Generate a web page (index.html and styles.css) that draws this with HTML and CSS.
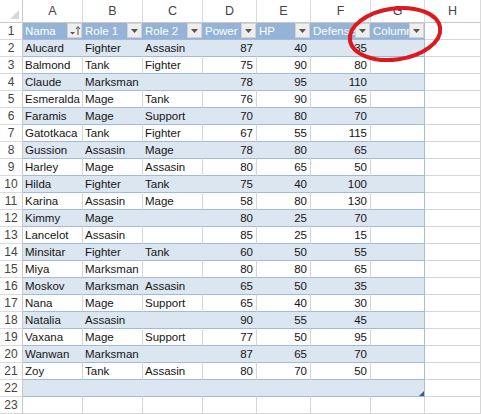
FILE: index.html
```html
<!DOCTYPE html>
<html>
<head>
<meta charset="utf-8">
<link rel="stylesheet" href="styles.css">
</head>
<body>
<div class="sheet">
  <div class="row head">
    <div class="corner"><svg width="22" height="22" viewBox="0 0 22 22"><polygon points="10,19 19,19 19,10" fill="#d8d8d8"/></svg></div>
    <div class="ch">A</div><div class="ch">B</div><div class="ch">C</div><div class="ch">D</div><div class="ch">E</div><div class="ch">F</div><div class="ch">G</div><div class="ch">H</div>
  </div>
  <div class="row thead">
    <div class="rh">1</div>
    <div class="c th">Nama<span class="fb"><svg width="13" height="13" viewBox="0 0 13 13"><polygon points="2,8 7,8 4.5,10.5" fill="#555"/><line x1="10" y1="3" x2="10" y2="11" stroke="#555" stroke-width="1"/><polyline points="8,5 10,2.5 12,5" fill="none" stroke="#555" stroke-width="1"/></svg></span></div>
    <div class="c th">Role 1<span class="fb"><svg width="13" height="13" viewBox="0 0 13 13"><polygon points="3,5 10,5 6.5,9" fill="#555"/></svg></span></div>
    <div class="c th">Role 2<span class="fb"><svg width="13" height="13" viewBox="0 0 13 13"><polygon points="3,5 10,5 6.5,9" fill="#555"/></svg></span></div>
    <div class="c th">Power<span class="fb"><svg width="13" height="13" viewBox="0 0 13 13"><polygon points="3,5 10,5 6.5,9" fill="#555"/></svg></span></div>
    <div class="c th">HP<span class="fb"><svg width="13" height="13" viewBox="0 0 13 13"><polygon points="3,5 10,5 6.5,9" fill="#555"/></svg></span></div>
    <div class="c th">Defense<span class="fb"><svg width="13" height="13" viewBox="0 0 13 13"><polygon points="3,5 10,5 6.5,9" fill="#555"/></svg></span></div>
    <div class="c th last">Column1<span class="fb"><svg width="13" height="13" viewBox="0 0 13 13"><polygon points="3,5 10,5 6.5,9" fill="#555"/></svg></span></div>
    <div class="c out"></div>
  </div>
  <div class="row band"><div class="rh">2</div><div class="c">Alucard</div><div class="c">Fighter</div><div class="c">Assasin</div><div class="c n">87</div><div class="c n">40</div><div class="c n">35</div><div class="c last"></div><div class="c out"></div></div>
  <div class="row plain"><div class="rh">3</div><div class="c">Balmond</div><div class="c">Tank</div><div class="c">Fighter</div><div class="c n">75</div><div class="c n">90</div><div class="c n">80</div><div class="c last"></div><div class="c out"></div></div>
  <div class="row band"><div class="rh">4</div><div class="c">Claude</div><div class="c">Marksman</div><div class="c"></div><div class="c n">78</div><div class="c n">95</div><div class="c n">110</div><div class="c last"></div><div class="c out"></div></div>
  <div class="row plain"><div class="rh">5</div><div class="c">Esmeralda</div><div class="c">Mage</div><div class="c">Tank</div><div class="c n">76</div><div class="c n">90</div><div class="c n">65</div><div class="c last"></div><div class="c out"></div></div>
  <div class="row band"><div class="rh">6</div><div class="c">Faramis</div><div class="c">Mage</div><div class="c">Support</div><div class="c n">70</div><div class="c n">80</div><div class="c n">70</div><div class="c last"></div><div class="c out"></div></div>
  <div class="row plain"><div class="rh">7</div><div class="c">Gatotkaca</div><div class="c">Tank</div><div class="c">Fighter</div><div class="c n">67</div><div class="c n">55</div><div class="c n">115</div><div class="c last"></div><div class="c out"></div></div>
  <div class="row band"><div class="rh">8</div><div class="c">Gussion</div><div class="c">Assasin</div><div class="c">Mage</div><div class="c n">78</div><div class="c n">80</div><div class="c n">65</div><div class="c last"></div><div class="c out"></div></div>
  <div class="row plain"><div class="rh">9</div><div class="c">Harley</div><div class="c">Mage</div><div class="c">Assasin</div><div class="c n">80</div><div class="c n">65</div><div class="c n">50</div><div class="c last"></div><div class="c out"></div></div>
  <div class="row band"><div class="rh">10</div><div class="c">Hilda</div><div class="c">Fighter</div><div class="c">Tank</div><div class="c n">75</div><div class="c n">40</div><div class="c n">100</div><div class="c last"></div><div class="c out"></div></div>
  <div class="row plain"><div class="rh">11</div><div class="c">Karina</div><div class="c">Assasin</div><div class="c">Mage</div><div class="c n">58</div><div class="c n">80</div><div class="c n">130</div><div class="c last"></div><div class="c out"></div></div>
  <div class="row band"><div class="rh">12</div><div class="c">Kimmy</div><div class="c">Mage</div><div class="c"></div><div class="c n">80</div><div class="c n">25</div><div class="c n">70</div><div class="c last"></div><div class="c out"></div></div>
  <div class="row plain"><div class="rh">13</div><div class="c">Lancelot</div><div class="c">Assasin</div><div class="c"></div><div class="c n">85</div><div class="c n">25</div><div class="c n">15</div><div class="c last"></div><div class="c out"></div></div>
  <div class="row band"><div class="rh">14</div><div class="c">Minsitar</div><div class="c">Fighter</div><div class="c">Tank</div><div class="c n">60</div><div class="c n">50</div><div class="c n">55</div><div class="c last"></div><div class="c out"></div></div>
  <div class="row plain"><div class="rh">15</div><div class="c">Miya</div><div class="c">Marksman</div><div class="c"></div><div class="c n">80</div><div class="c n">80</div><div class="c n">65</div><div class="c last"></div><div class="c out"></div></div>
  <div class="row band"><div class="rh">16</div><div class="c">Moskov</div><div class="c">Marksman</div><div class="c">Assasin</div><div class="c n">65</div><div class="c n">50</div><div class="c n">35</div><div class="c last"></div><div class="c out"></div></div>
  <div class="row plain"><div class="rh">17</div><div class="c">Nana</div><div class="c">Mage</div><div class="c">Support</div><div class="c n">65</div><div class="c n">40</div><div class="c n">30</div><div class="c last"></div><div class="c out"></div></div>
  <div class="row band"><div class="rh">18</div><div class="c">Natalia</div><div class="c">Assasin</div><div class="c"></div><div class="c n">90</div><div class="c n">55</div><div class="c n">45</div><div class="c last"></div><div class="c out"></div></div>
  <div class="row plain"><div class="rh">19</div><div class="c">Vaxana</div><div class="c">Mage</div><div class="c">Support</div><div class="c n">77</div><div class="c n">50</div><div class="c n">95</div><div class="c last"></div><div class="c out"></div></div>
  <div class="row band"><div class="rh">20</div><div class="c">Wanwan</div><div class="c">Marksman</div><div class="c"></div><div class="c n">87</div><div class="c n">65</div><div class="c n">70</div><div class="c last"></div><div class="c out"></div></div>
  <div class="row plain"><div class="rh">21</div><div class="c">Zoy</div><div class="c">Tank</div><div class="c">Assasin</div><div class="c n">80</div><div class="c n">70</div><div class="c n">50</div><div class="c last"></div><div class="c out"></div></div>
  <div class="row band"><div class="rh">22</div><div class="c"></div><div class="c"></div><div class="c"></div><div class="c"></div><div class="c"></div><div class="c"></div><div class="c last"><span class="grip"><svg width="5" height="5" viewBox="0 0 5 5"><polygon points="0,5 5,5 5,0" fill="#3d5d8c"/></svg></span></div><div class="c out"></div></div>
  <div class="row free"><div class="rh">23</div><div class="c"></div><div class="c"></div><div class="c"></div><div class="c"></div><div class="c"></div><div class="c"></div><div class="c"></div><div class="c out"></div></div>
</div>
<svg class="mark" width="120" height="72" viewBox="0 0 120 72"><ellipse cx="57" cy="34" rx="45.5" ry="25.5" transform="rotate(-8 57 34)" fill="none" stroke="#dc1820" stroke-width="4"/></svg>
</body>
</html>
```
FILE: styles.css
```css
html, body {
  margin: 0;
  padding: 0;
  background: #ffffff;
}
body {
  position: relative;
  width: 481px;
  height: 414px;
  overflow: hidden;
  font-family: "Liberation Sans", Arial, sans-serif;
  font-size: 11.5px;
  color: #151515;
}
.sheet {
  display: grid;
  grid-template-columns: 23px 60px 60px 60px 54px 54px 60px 54px 56px;
  grid-template-rows: 23px repeat(23, 17px);
}
.row {
  display: contents;
}
.corner, .ch, .rh, .c {
  box-sizing: border-box;
  border-right: 1px solid #d6d6d6;
  border-bottom: 1px solid #d6d6d6;
  overflow: hidden;
  white-space: nowrap;
}
.corner {
  background: #fff;
  border-bottom-color: #c8c8c8;
  border-right-color: #c8c8c8;
}
.corner svg { display: block; }
.ch {
  text-align: center;
  line-height: 22px;
  color: #444;
  font-size: 12.5px;
  border-bottom-color: #c8c8c8;
  border-right-color: #dadada;
}
.rh {
  text-align: center;
  line-height: 16px;
  color: #444;
  font-size: 12px;
  border-right-color: #c8c8c8;
  border-bottom-color: #dadada;
}
.c {
  line-height: 16px;
  padding: 0 2px 0 2px;
}
.c.n {
  text-align: right;
  padding-right: 3px;
}
.thead .c, .band .c, .plain .c {
  border-bottom-color: #9fbadc;
}
.thead .c.out, .band .c.out, .plain .c.out {
  border-bottom-color: #d6d6d6;
}
.thead .th {
  position: relative;
  background: #95b3d7;
  color: #ffffff;
  border-right-color: #95b3d7;
}
.band .c {
  background: #dce6f1;
  border-right-color: #dce6f1;
}
.band .c.out {
  background: #fff;
  border-right-color: #d6d6d6;
}
.thead .c.last, .band .c.last, .plain .c.last {
  border-right-color: #a6bcd8;
  position: relative;
}
.fb {
  position: absolute;
  right: 0;
  top: 0;
  width: 15px;
  height: 15px;
  box-sizing: border-box;
  background: #eeeeee;
  border: 1px solid #d2d2d2;
}
.fb svg {
  display: block;
}
.grip {
  position: absolute;
  right: 0;
  bottom: 0;
  width: 5px;
  height: 5px;
}
.grip svg { display: block; }
.mark {
  position: absolute;
  left: 338px;
  top: 0;
}
```
